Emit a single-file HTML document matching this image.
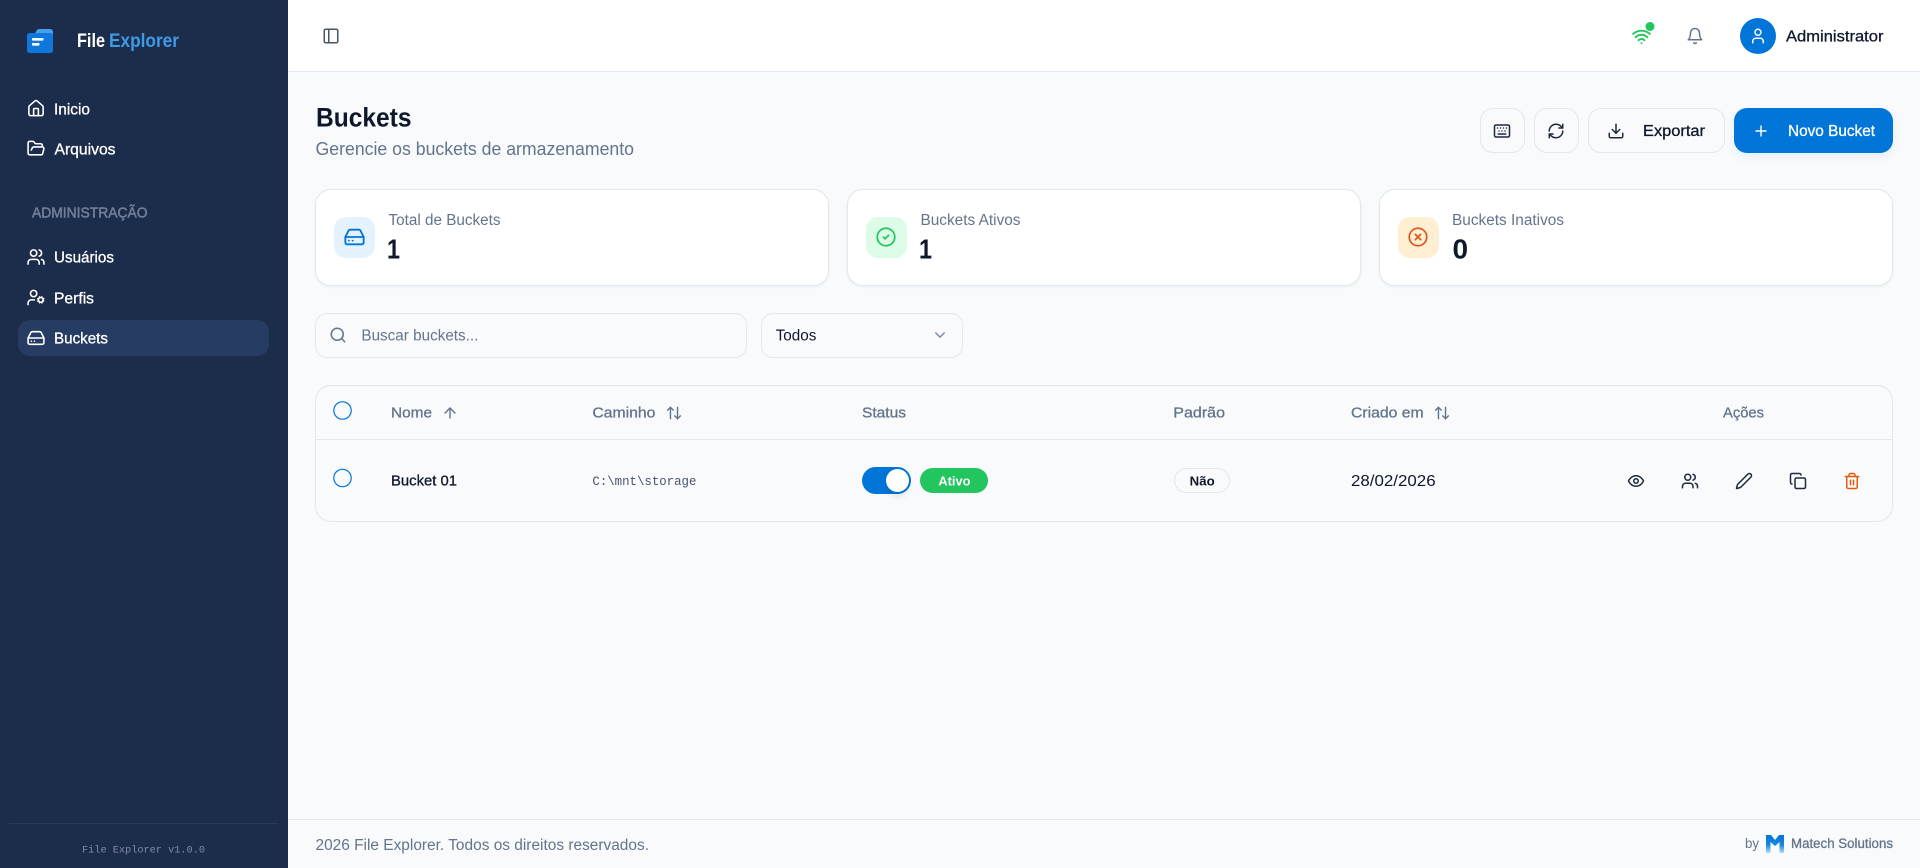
<!DOCTYPE html>
<html lang="pt-BR">
<head>
<meta charset="utf-8">
<title>File Explorer - Buckets</title>
<style>
html,body{margin:0;padding:0;width:1920px;height:868px;overflow:hidden;background:#f8fafc;font-family:"Liberation Sans",sans-serif}
.b{position:absolute;box-sizing:border-box}
.o{border:1px solid #e2e8f0}
svg#t{position:absolute;left:0;top:0}
svg#t text{font-family:"Liberation Sans",sans-serif;font-size:15.5px}
.mono{font-family:"Liberation Mono",monospace!important}
.d{fill:#0f172a}.g{fill:#64748b}.w{fill:#fff}
.m{stroke-width:.3px}
.d.m{stroke:#0f172a}.g.m{stroke:#64748b}.w.m{stroke:#fff}
.i{fill:none;stroke-width:2;stroke-linecap:round;stroke-linejoin:round}
.iw{stroke:#fff}.id{stroke:#1e293b}.ig{stroke:#64748b}
</style>
</head>
<body>
<aside class="b" style="left:0;top:0;width:288px;height:868px;background:#1c2d4b"></aside>
<div class="b" style="left:18px;top:320px;width:251px;height:36px;border-radius:12px;background:#263c63"></div>
<div class="b" style="left:9px;top:823px;width:269px;height:1px;background:#283a5c"></div>
<header class="b" style="left:288px;top:0;width:1632px;height:72px;background:#fff;border-bottom:1px solid #e2e8f0"></header>

<div class="b o" style="left:1480px;top:108px;width:45px;height:45px;border-radius:13px"></div>
<div class="b o" style="left:1534px;top:108px;width:45px;height:45px;border-radius:13px"></div>
<div class="b o" style="left:1588px;top:108px;width:137px;height:45px;border-radius:13px"></div>
<div class="b" style="left:1734px;top:108px;width:159px;height:45px;border-radius:13px;background:#0275d8;box-shadow:0 4px 10px rgba(2,117,216,.08)"></div>

<div class="b o" style="left:315px;top:189px;width:514px;height:97px;border-radius:16px;background:#fff;box-shadow:0 1px 3px rgba(15,23,42,.06)"></div>
<div class="b o" style="left:847px;top:189px;width:514px;height:97px;border-radius:16px;background:#fff;box-shadow:0 1px 3px rgba(15,23,42,.06)"></div>
<div class="b o" style="left:1379px;top:189px;width:514px;height:97px;border-radius:16px;background:#fff;box-shadow:0 1px 3px rgba(15,23,42,.06)"></div>
<div class="b" style="left:334px;top:217px;width:41px;height:41px;border-radius:12px;background:#e3f2fd"></div>
<div class="b" style="left:866px;top:217px;width:41px;height:41px;border-radius:12px;background:#dcfce7"></div>
<div class="b" style="left:1398px;top:217px;width:41px;height:41px;border-radius:12px;background:#feefd2"></div>

<div class="b o" style="left:315px;top:313px;width:432px;height:45px;border-radius:12px"></div>
<div class="b o" style="left:761px;top:313px;width:202px;height:45px;border-radius:12px"></div>

<div class="b o" style="left:315px;top:385px;width:1578px;height:137px;border-radius:16px"></div>
<div class="b" style="left:316px;top:439px;width:1576px;height:1px;background:#e2e8f0"></div>

<div class="b" style="left:862px;top:467px;width:49px;height:27px;border-radius:14px;background:#0275d8"></div>
<div class="b" style="left:885.500px;top:469px;width:23px;height:23px;border-radius:50%;background:#fff;box-shadow:0 4px 8px rgba(15,23,42,.10)"></div>
<div class="b" style="left:920px;top:468px;width:68px;height:25px;border-radius:13px;background:#22c55e"></div>
<div class="b o" style="left:1174px;top:468px;width:56px;height:25px;border-radius:13px"></div>

<div class="b" style="left:288px;top:819px;width:1632px;height:1px;background:#e2e8f0"></div>

<svg id="t" width="1920" height="868" viewBox="0 0 1920 868" xmlns="http://www.w3.org/2000/svg">
<defs>
<linearGradient id="mg" gradientUnits="userSpaceOnUse" x1="0" y1="835" x2="0" y2="853"><stop offset="0" stop-color="#0275d8"/><stop offset=".55" stop-color="#1b86de"/><stop offset="1" stop-color="#b5dcf7"/></linearGradient>
<symbol id="users" viewBox="0 0 24 24"><path d="M16 21v-2a4 4 0 0 0-4-4H6a4 4 0 0 0-4 4v2"/><circle cx="9" cy="7" r="4"/><path d="M22 21v-2a4 4 0 0 0-3-3.870"/><path d="M16 3.130a4 4 0 0 1 0 7.750"/></symbol>
<symbol id="drive" viewBox="0 0 24 24"><path d="M22 12H2"/><path d="M5.450 5.110 2 12v6a2 2 0 0 0 2 2h16a2 2 0 0 0 2-2v-6l-3.450-6.890A2 2 0 0 0 16.760 4H7.240a2 2 0 0 0-1.790 1.110z"/><path d="M6 16h.01"/><path d="M10 16h.01"/></symbol>
<symbol id="updown" viewBox="0 0 24 24"><path d="m21 16-4 4-4-4"/><path d="M17 20V4"/><path d="m3 8 4-4 4 4"/><path d="M7 4v16"/></symbol>
</defs>

<!-- logo -->
<path d="M35 33l2-3q.8-1 2-1h11q3 0 3 3v4H35z" fill="#4a9fea"/>
<rect x="27" y="33" width="26" height="20" rx="2.500" fill="#0f78dc"/>
<rect x="32" y="38" width="11.500" height="2.600" rx=".8" fill="#fff"/>
<rect x="32" y="43" width="7.500" height="2.600" rx=".8" fill="#fff"/>
<text x="77" y="47" textLength="28" lengthAdjust="spacingAndGlyphs" font-weight="700" class="w" style="font-size:19px">File</text>
<text x="109" y="47" textLength="70" lengthAdjust="spacingAndGlyphs" font-weight="700" fill="#3f9ae8" style="font-size:19px">Explorer</text>

<!-- nav -->
<svg x="26.500" y="99" width="19" height="19" viewBox="0 0 24 24" class="i iw"><path d="M15 21v-8a1 1 0 0 0-1-1h-4a1 1 0 0 0-1 1v8"/><path d="M3 10a2 2 0 0 1 .709-1.528l7-5.999a2 2 0 0 1 2.582 0l7 5.999A2 2 0 0 1 21 10v9a2 2 0 0 1-2 2H5a2 2 0 0 1-2-2z"/></svg>
<text x="54" y="114.500" textLength="36" lengthAdjust="spacingAndGlyphs" class="w m" style="font-size:16px">Inicio</text>
<svg x="26.500" y="139" width="19" height="19" viewBox="0 0 24 24" class="i iw"><path d="m6 14 1.450-2.900A2 2 0 0 1 9.240 10H20a2 2 0 0 1 1.940 2.500l-1.550 6a2 2 0 0 1-1.940 1.500H4a2 2 0 0 1-2-2V5c0-1.100.9-2 2-2h3.930a2 2 0 0 1 1.660.9l.82 1.200a2 2 0 0 0 1.660.9H18a2 2 0 0 1 2 2v2"/></svg>
<text x="54.500" y="154.300" textLength="61" lengthAdjust="spacingAndGlyphs" class="w m" style="font-size:16px">Arquivos</text>
<text x="32" y="217.300" textLength="115.500" lengthAdjust="spacingAndGlyphs" fill="#717f99" stroke="#717f99" stroke-width=".5" style="font-size:14.500px">ADMINISTRAÇÃO</text>
<svg x="26.500" y="247.500" width="19" height="19" class="i iw"><use href="#users"/></svg>
<text x="54" y="262.700" textLength="60" lengthAdjust="spacingAndGlyphs" class="w m" style="font-size:16px">Usuários</text>
<svg x="26.500" y="288" width="19" height="19" viewBox="0 0 24 24" class="i iw"><circle cx="9" cy="7" r="4"/><path d="M10 15H6a4 4 0 0 0-4 4v2"/><circle cx="18" cy="15" r="3"/><path d="m21.700 16.400-.9-.3M15.200 13.900l-.9-.3M16.600 18.700l.3-.9M19.100 12.200l.3-.9M19.600 18.700l-.4-1M16.800 12.300l-.4-1M14.300 16.600l1-.4M20.700 13.800l1-.4"/></svg>
<text x="54" y="303.300" textLength="40" lengthAdjust="spacingAndGlyphs" class="w m" style="font-size:16px">Perfis</text>
<svg x="26.500" y="328.500" width="19" height="19" class="i iw"><use href="#drive"/></svg>
<text x="54" y="343.300" textLength="54" lengthAdjust="spacingAndGlyphs" class="w m" style="font-size:16px">Buckets</text>
<text x="82" y="852.700" textLength="123" lengthAdjust="spacingAndGlyphs" class="mono" fill="#7f8ba3" style="font-size:10.300px">File Explorer v1.0.0</text>

<!-- header -->
<svg x="322" y="27" width="18" height="18" viewBox="0 0 24 24" class="i" stroke="#475569"><rect x="3" y="3" width="18" height="18" rx="2"/><path d="M9 3v18"/></svg>
<svg x="1631.500" y="26.500" width="20" height="20" viewBox="0 0 24 24" class="i" stroke="#22c55e" style="stroke-width:2.300"><path d="M12 20h.01"/><path d="M2 8.820a15 15 0 0 1 20 0"/><path d="M5 12.859a10 10 0 0 1 14 0"/><path d="M8.500 16.429a5 5 0 0 1 7 0"/></svg>
<circle cx="1650" cy="26.500" r="4.500" fill="#22c55e"/>
<svg x="1686" y="27" width="18" height="18" viewBox="0 0 24 24" class="i ig"><path d="M6 8a6 6 0 0 1 12 0c0 7 3 9 3 9H3s3-2 3-9"/><path d="M10.300 21a1.940 1.940 0 0 0 3.400 0"/></svg>
<circle cx="1758" cy="36" r="18" fill="#0275d8"/>
<svg x="1749" y="27" width="18" height="18" viewBox="0 0 24 24" class="i iw"><path d="M19 21v-2a4 4 0 0 0-4-4H9a4 4 0 0 0-4 4v2"/><circle cx="12" cy="7" r="4"/></svg>
<text x="1786" y="41.300" textLength="97.500" lengthAdjust="spacingAndGlyphs" class="d m" style="font-size:16px">Administrator</text>

<!-- page title -->
<text x="316" y="126.700" textLength="95.500" lengthAdjust="spacingAndGlyphs" font-weight="700" class="d" style="font-size:26.500px">Buckets</text>
<text x="315.500" y="155" textLength="318.500" lengthAdjust="spacingAndGlyphs" class="g" style="font-size:18px">Gerencie os buckets de armazenamento</text>

<!-- actions -->
<svg x="1493" y="122" width="18" height="18" viewBox="0 0 24 24" class="i id"><path d="M10 8h.01M12 12h.01M14 8h.01M16 12h.01M18 8h.01M6 8h.01M7 16h10M8 12h.01"/><rect x="2" y="4" width="20" height="16" rx="2"/></svg>
<svg x="1547" y="122" width="18" height="18" viewBox="0 0 24 24" class="i id"><path d="M3 12a9 9 0 0 1 9-9 9.750 9.750 0 0 1 6.740 2.740L21 8"/><path d="M21 3v5h-5"/><path d="M21 12a9 9 0 0 1-9 9 9.750 9.750 0 0 1-6.740-2.740L3 16"/><path d="M8 16H3v5"/></svg>
<svg x="1607" y="122" width="18" height="18" viewBox="0 0 24 24" class="i id"><path d="M21 15v4a2 2 0 0 1-2 2H5a2 2 0 0 1-2-2v-4"/><path d="m7 10 5 5 5-5"/><path d="M12 15V3"/></svg>
<text x="1643" y="136" textLength="62" lengthAdjust="spacingAndGlyphs" class="d m" style="font-size:16px">Exportar</text>
<svg x="1752.500" y="122.500" width="17" height="17" viewBox="0 0 24 24" class="i iw"><path d="M5 12h14"/><path d="M12 5v14"/></svg>
<text x="1788" y="136" textLength="87" lengthAdjust="spacingAndGlyphs" class="w m" style="font-size:16px">Novo Bucket</text>

<!-- stat cards -->
<svg x="343.500" y="226" width="22" height="22" class="i" stroke="#0275d8"><use href="#drive"/></svg>
<text x="388.500" y="225" textLength="112" lengthAdjust="spacingAndGlyphs" class="g" style="font-size:15.500px">Total de Buckets</text>
<text x="387" y="258.300" textLength="13" lengthAdjust="spacingAndGlyphs" font-weight="700" class="d" style="font-size:28px">1</text>
<svg x="875.500" y="226.500" width="21" height="21" viewBox="0 0 24 24" class="i" stroke="#22c55e"><circle cx="12" cy="12" r="10"/><path d="m9 12 2 2 4-4"/></svg>
<text x="920.500" y="225" textLength="100" lengthAdjust="spacingAndGlyphs" class="g" style="font-size:15.500px">Buckets Ativos</text>
<text x="919" y="258.300" textLength="13" lengthAdjust="spacingAndGlyphs" font-weight="700" class="d" style="font-size:28px">1</text>
<svg x="1407.500" y="226.500" width="21" height="21" viewBox="0 0 24 24" class="i" stroke="#dc5a23"><circle cx="12" cy="12" r="10"/><path d="m15 9-6 6"/><path d="m9 9 6 6"/></svg>
<text x="1452" y="225" textLength="112" lengthAdjust="spacingAndGlyphs" class="g" style="font-size:15.500px">Buckets Inativos</text>
<text x="1452.500" y="258.300" font-weight="700" class="d" style="font-size:28px">0</text>

<!-- filters -->
<svg x="329" y="326" width="18" height="18" viewBox="0 0 24 24" class="i ig"><circle cx="11" cy="11" r="8"/><path d="m21 21-4.300-4.300"/></svg>
<text x="361.400" y="340.700" textLength="117" lengthAdjust="spacingAndGlyphs" class="g" style="font-size:15.500px">Buscar buckets...</text>
<text x="775.700" y="340.700" textLength="40.700" lengthAdjust="spacingAndGlyphs" class="d" style="font-size:15.500px">Todos</text>
<svg x="931.500" y="326.500" width="17" height="17" viewBox="0 0 24 24" class="i" stroke="#7b8aa0"><path d="m6 9 6 6 6-6"/></svg>

<!-- table head -->
<circle cx="342.500" cy="410.500" r="8.700" fill="none" stroke="#0275d8" stroke-width="1.200"/>
<text x="391" y="417.700" textLength="41" lengthAdjust="spacingAndGlyphs" class="g m" style="font-size:14.500px">Nome</text>
<svg x="441.500" y="404.500" width="17" height="17" viewBox="0 0 24 24" class="i ig"><path d="m5 12 7-7 7 7"/><path d="M12 19V5"/></svg>
<text x="592.400" y="417.700" textLength="63" lengthAdjust="spacingAndGlyphs" class="g m" style="font-size:14.500px">Caminho</text>
<svg x="665.500" y="404.500" width="17" height="17" class="i ig"><use href="#updown"/></svg>
<text x="862" y="417.700" textLength="44" lengthAdjust="spacingAndGlyphs" class="g m" style="font-size:14.500px">Status</text>
<text x="1173.300" y="417.700" textLength="51.700" lengthAdjust="spacingAndGlyphs" class="g m" style="font-size:14.500px">Padrão</text>
<text x="1351" y="417.700" textLength="72.600" lengthAdjust="spacingAndGlyphs" class="g m" style="font-size:14.500px">Criado em</text>
<svg x="1433.500" y="404.500" width="17" height="17" class="i ig"><use href="#updown"/></svg>
<text x="1723" y="417.700" textLength="41" lengthAdjust="spacingAndGlyphs" class="g m" style="font-size:14.500px">Ações</text>

<!-- table row -->
<circle cx="342.500" cy="478" r="8.700" fill="none" stroke="#0275d8" stroke-width="1.200"/>
<text x="391" y="485.700" textLength="66" lengthAdjust="spacingAndGlyphs" class="d m" style="font-size:15px">Bucket 01</text>
<text x="592.400" y="485" textLength="104" lengthAdjust="spacingAndGlyphs" class="mono" fill="#475569" style="font-size:13px">C:\mnt\storage</text>
<text x="938.400" y="485.300" textLength="32" lengthAdjust="spacingAndGlyphs" font-weight="700" class="w" style="font-size:13px">Ativo</text>
<text x="1189.700" y="485.500" textLength="25" lengthAdjust="spacingAndGlyphs" font-weight="700" class="d" style="font-size:13px">Não</text>
<text x="1351" y="486" textLength="84.600" lengthAdjust="spacingAndGlyphs" class="d" style="font-size:15.500px">28/02/2026</text>

<svg x="1627" y="472" width="18" height="18" viewBox="0 0 24 24" class="i id"><path d="M2 12s3-7 10-7 10 7 10 7-3 7-10 7-10-7-10-7Z"/><circle cx="12" cy="12" r="3"/></svg>
<svg x="1681" y="472" width="18" height="18" class="i id"><use href="#users"/></svg>
<svg x="1735" y="472" width="18" height="18" viewBox="0 0 24 24" class="i id"><path d="M21.174 6.812a1 1 0 0 0-3.986-3.987L3.842 16.174a2 2 0 0 0-.5.83l-1.321 4.352a.5.5 0 0 0 .623.622l4.353-1.320a2 2 0 0 0 .83-.497z"/></svg>
<svg x="1789" y="472" width="18" height="18" viewBox="0 0 24 24" class="i id"><rect x="8" y="8" width="14" height="14" rx="2"/><path d="M4 16c-1.100 0-2-.9-2-2V4c0-1.100.9-2 2-2h10c1.100 0 2 .9 2 2"/></svg>
<svg x="1843" y="472" width="18" height="18" viewBox="0 0 24 24" class="i" stroke="#ea580c"><path d="M3 6h18"/><path d="M19 6v14c0 1-1 2-2 2H7c-1 0-2-1-2-2V6"/><path d="M8 6V4c0-1 1-2 2-2h4c1 0 2 1 2 2v2"/><path d="M10 11v6"/><path d="M14 11v6"/></svg>

<!-- footer -->
<text x="315.500" y="850" textLength="333.500" lengthAdjust="spacingAndGlyphs" class="g" style="font-size:15.500px">2026 File Explorer. Todos os direitos reservados.</text>
<text x="1745" y="848" textLength="14" lengthAdjust="spacingAndGlyphs" class="g" style="font-size:13.500px">by</text>
<path d="M1766 835h5l4 5 4-5h5v18h-4.500v-11l-4.500 4-4.500-4v11H1766z" fill="url(#mg)"/>
<text x="1791" y="848" textLength="102" lengthAdjust="spacingAndGlyphs" class="g m" style="font-size:13.500px">Matech Solutions</text>
</svg>
</body>
</html>
